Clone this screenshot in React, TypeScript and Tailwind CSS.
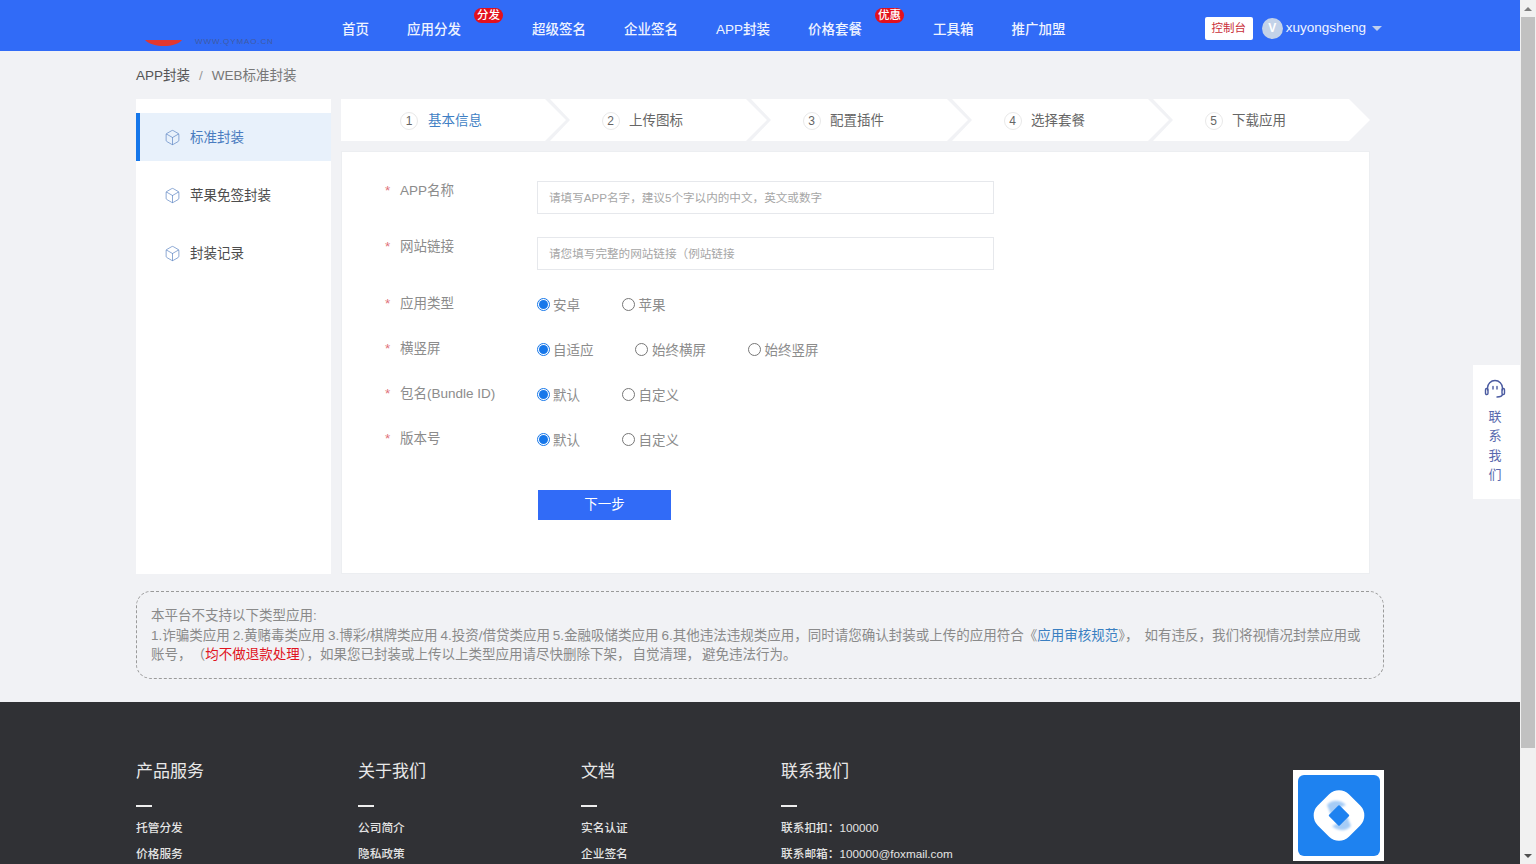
import { Box } from "lucide-react";

const navItems = [
  { label: "首页" },
  { label: "应用分发", badge: "分发" },
  { label: "超级签名" },
  { label: "企业签名" },
  { label: "APP封装" },
  { label: "价格套餐", badge: "优惠" },
  { label: "工具箱" },
  { label: "推广加盟" },
];

const steps = ["基本信息", "上传图标", "配置插件", "选择套餐", "下载应用"];

const sideItems = ["标准封装", "苹果免签封装", "封装记录"];

const radioRows = [
  { label: "应用类型", options: ["安卓", "苹果"] },
  { label: "横竖屏", options: ["自适应", "始终横屏", "始终竖屏"] },
  { label: "包名(Bundle ID)", options: ["默认", "自定义"] },
  { label: "版本号", options: ["默认", "自定义"] },
];

const footerCols = [
  { title: "产品服务", width: "w-[222px]", links: ["托管分发", "价格服务"] },
  { title: "关于我们", width: "w-[223px]", links: ["公司简介", "隐私政策"] },
  { title: "文档", width: "w-[200px]", links: ["实名认证", "企业签名"] },
  { title: "联系我们", width: "w-[300px]", links: ["联系扣扣：100000", "联系邮箱：100000@foxmail.com"] },
];

function FieldLabel({ text }: { text: string }) {
  return (
    <div className="flex h-[18px] w-[152px] translate-y-px items-center text-[13.5px] leading-[18px] text-[#8c8c8c]">
      <span className="w-[15px] text-[#e0707a]">*</span>
      <span className="whitespace-nowrap">{text}</span>
    </div>
  );
}

function Radio({ label, checked }: { label: string; checked?: boolean }) {
  return (
    <div className="flex items-center">
      {checked ? (
        <span className="flex h-[13px] w-[13px] items-center justify-center rounded-full border border-[#1677ea]">
          <span className="h-[9px] w-[9px] rounded-full bg-[#1677ea]" />
        </span>
      ) : (
        <span className="h-[13px] w-[13px] rounded-full border border-[#777]" />
      )}
      <span className={`mt-[2px] translate-y-px text-[13.5px] leading-[18px] text-[#8c8c8c] ${checked ? "ml-[3px]" : "ml-[4px]"}`}>
        {label}
      </span>
    </div>
  );
}

function TextField({ placeholder }: { placeholder: string }) {
  return (
    <input
      readOnly
      placeholder={placeholder}
      className="h-[33px] w-[457px] border border-[#e6e8ec] bg-white px-[11px] pb-[1px] text-[11.6px] outline-none placeholder:text-[#a6a6a6]"
    />
  );
}

export default function App() {
  return (
    <div className="flex h-screen overflow-hidden bg-[#f1f1f1] font-['Liberation_Sans','Noto_Sans_CJK_SC',sans-serif]">
      <div className="relative h-full w-[1520px] shrink-0 overflow-hidden bg-[#f1f2f5]">
        {/* Header */}
        <header className="flex h-[51px] bg-[#316bf7] pl-[136px] pr-[138px]">
          <div className="flex h-full w-[206px] overflow-hidden">
            <svg viewBox="0 0 37 7" className="ml-[9px] mt-[40px] h-[7px] w-[37px] shrink-0">
              <path d="M0 0 H37 C30 8 8 8 0 0 Z" fill="#e2372f" />
            </svg>
            <span className="ml-[13px] mt-[37px] whitespace-nowrap text-[8px] leading-[10px] tracking-[0.9px] text-[#3f5aa5]">
              WWW.QYMAO.CN
            </span>
          </div>
          <nav className="flex h-full items-center gap-[38px] pt-[8px]">
            {navItems.map((item) => (
              <div
                key={item.label}
                className={`relative whitespace-nowrap text-[13.5px] font-medium leading-5 text-[#eef3ff] ${item.badge ? "mr-[33px]" : ""}`}
              >
                {item.label}
                {item.badge && (
                  <span className="absolute left-[calc(100%+13px)] top-[-12px] flex h-[15px] w-[29px] items-center justify-center rounded-full bg-[#e3101c] text-[11.5px] text-white">
                    {item.badge}
                  </span>
                )}
              </div>
            ))}
          </nav>
          <div className="ml-auto flex h-full items-center pt-[5px]">
            <div className="flex h-[23px] w-[48px] items-center justify-center rounded-[2px] bg-white pt-[2px] text-[11.5px] text-[#c9303a]">
              控制台
            </div>
            <div className="ml-[9px] flex h-[21px] w-[21px] items-center justify-center rounded-full bg-[#c3d2e8] text-[12px] font-bold text-white">
              V
            </div>
            <span className="ml-[3px] text-[13.5px] text-[#eef3ff]">xuyongsheng</span>
            <span className="ml-[6px] mt-[1px] h-0 w-0 border-x-[5px] border-t-[5px] border-x-transparent border-t-[#c0cfee]" />
          </div>
        </header>

        {/* Breadcrumb */}
        <div className="flex h-[48px] items-center pl-[136px] pt-[2px] text-[13.5px]">
          <span className="text-[#555]">APP封装</span>
          <span className="mx-[9px] text-[#999]">/</span>
          <span className="text-[#777]">WEB标准封装</span>
        </div>

        <div className="ml-[136px] w-[1248px]">
          <div className="flex h-[475px]">
            {/* Sidebar */}
            <aside className="w-[195px] shrink-0 bg-white pt-[14px]">
              <div className="flex flex-col gap-[10px]">
                {sideItems.map((item, i) => (
                  <div
                    key={item}
                    className={`flex h-[48px] items-center text-[13.5px] ${i === 0 ? "border-l-4 border-[#1677ea] bg-[#e8f1fb] pl-[25px] text-[#4a7cc0]" : "pl-[29px] text-[#4d4d4d]"}`}
                  >
                    <Box size={17} strokeWidth={1} className="-ml-px shrink-0 text-[#5f86c4]" />
                    <span className="ml-[9px] translate-y-[1px]">{item}</span>
                  </div>
                ))}
              </div>
            </aside>

            <div className="ml-[10px] w-[1029px]">
              {/* Steps */}
              <div className="flex h-[42px]">
                {steps.map((step, i) => (
                  <div
                    key={step}
                    className={
                      i === 0
                        ? "flex h-full w-[225px] shrink-0 items-center bg-white pl-[59px] [clip-path:polygon(0_0,204px_0,100%_50%,204px_100%,0_100%)]"
                        : "-ml-[16px] flex h-full w-[217px] shrink-0 items-center bg-white pl-[51.5px] [clip-path:polygon(0_0,196px_0,100%_50%,196px_100%,0_100%,20px_50%)]"
                    }
                  >
                    <span className="flex h-[18px] w-[18px] translate-y-px items-center justify-center rounded-full border border-[#e8e8e8] text-[12px] text-[#666]">
                      {i + 1}
                    </span>
                    <span className={`translate-y-px text-[13.5px] ${i === 0 ? "ml-[10px] text-[#3f7fc4]" : "ml-[9.5px] text-[#666]"}`}>
                      {step}
                    </span>
                  </div>
                ))}
              </div>

              {/* Form */}
              <div className="mt-[10px] h-[423px] border border-[#eceef1] bg-white pl-[43px] pt-[29px]">
                <div className="mb-[23px] flex">
                  <FieldLabel text="APP名称" />
                  <TextField placeholder="请填写APP名字，建议5个字以内的中文，英文或数字" />
                </div>
                <div className="mb-[24px] flex">
                  <FieldLabel text="网站链接" />
                  <TextField placeholder="请您填写完整的网站链接（例站链接" />
                </div>
                {radioRows.map((row) => (
                  <div key={row.label} className="mb-[25px] flex h-[20px]">
                    <FieldLabel text={row.label} />
                    <div className="flex h-[20px] gap-[41.5px]">
                      {row.options.map((option, i) => (
                        <Radio key={option} label={option} checked={i === 0} />
                      ))}
                    </div>
                  </div>
                ))}
                <button className="ml-[153px] mt-[41px] flex h-[30px] w-[133px] items-center justify-center bg-[#316bf7] text-[13.5px] text-white">
                  下一步
                </button>
              </div>
            </div>
          </div>

          {/* Notice */}
          <div className="mt-[17px] h-[88px] whitespace-nowrap rounded-[15px] border border-dashed border-[#9a9a9a] pl-[14px] pt-[14px] text-[13.5px] leading-[19.5px] text-[#8a8a8a] [word-spacing:-0.8px]">
            本平台不支持以下类型应用:
            <br />
            1.诈骗类应用 2.黄赌毒类应用 3.博彩/棋牌类应用 4.投资/借贷类应用 5.金融吸储类应用 6.其他违法违规类应用，同时请您确认封装或上传的应用符合《
            <span className="text-[#3a7fc1]">应用审核规范</span>
            》，<span className="ml-[6px]">如有违反，我们将视情况封禁应用或</span>
            <br />
            账号，<span className="ml-[7px]">（</span><span className="text-[#e0141e]">均不做退款处理</span>），如果您已封装或上传以上类型应用请尽快删除下架，<span className="ml-[2px]">自觉清理，</span><span className="ml-[2px]">避免违法行为。</span>
          </div>
        </div>

        {/* Footer */}
        <footer className="mt-[23px] flex h-[200px] bg-[#303135] pl-[136px] pr-[136px] pt-[59px]">
          {footerCols.map((col) => (
            <div key={col.title} className={`${col.width} shrink-0`}>
              <div className="text-[17px] leading-[22px] text-[#e8e8e8]">{col.title}</div>
              <div className="mt-[22px] h-[2px] w-[16px] bg-[#eee]" />
              <div className="mt-[13px] flex flex-col gap-[10px]">
                {col.links.map((link) => (
                  <div key={link} className="whitespace-nowrap text-[11.7px] font-medium leading-4 text-[#e4e4e4]">
                    {link}
                  </div>
                ))}
              </div>
            </div>
          ))}
          <div className="ml-auto mt-[9px] h-[91px] w-[91px] shrink-0 bg-white p-[5px]">
            <svg viewBox="0 0 82 81" className="h-[81px] w-[82px]">
              <defs>
                <filter id="soft" x="-30%" y="-30%" width="160%" height="160%">
                  <feGaussianBlur stdDeviation="1.1" />
                </filter>
              </defs>
              <rect width="82" height="81" rx="6" fill="#1e82f0" />
              <rect x="19" y="18.5" width="44" height="44" rx="14" transform="rotate(45 41 40.5)" fill="#fff" />
              <g filter="url(#soft)" fill="#a6ccf6">
                <path d="M29 30 C34 24 43 25 48 30 L41 33 L33 40 Z" />
                <path d="M53 51 C48 57 39 56 34 51 L41 48 L49 41 Z" />
              </g>
              <rect x="33.5" y="33" width="15" height="15" rx="1" transform="rotate(45 41 40.5)" fill="#1e82f0" />
            </svg>
          </div>
        </footer>

        {/* Contact widget */}
        <div className="absolute right-0 top-[365px] flex h-[134px] w-[47px] flex-col items-center bg-white pr-[3px] pt-[14px]">
          <svg viewBox="0 0 22 20" className="h-[20px] w-[22px]" fill="none" stroke="#4a5aa0" strokeWidth="1.4" strokeLinecap="round">
            <path d="M3.5 11 V9 a7.5 7.5 0 0 1 15 0 V11" />
            <rect x="1.5" y="9.5" width="2.5" height="6" rx="1.2" />
            <rect x="18" y="9.5" width="2.5" height="6" rx="1.2" />
            <path d="M18.5 15.5 C18 17.5 15.5 18 13 18" />
            <path d="M9 7.5 V10 M13 7.5 V10" />
          </svg>
          <div className="mt-[8px] flex flex-col items-center text-[13px] leading-[19.3px] text-[#5a6aae]">
            <span>联</span>
            <span>系</span>
            <span>我</span>
            <span>们</span>
          </div>
        </div>
      </div>

      {/* Scrollbar */}
      <div className="flex h-full w-4 shrink-0 flex-col items-center bg-[#f1f1f1]">
        <div className="flex h-[17px] items-center">
          <span className="h-0 w-0 border-x-4 border-b-4 border-x-transparent border-b-[#7d7d7d]" />
        </div>
        <div className="h-[731px] w-[14px] bg-[#c1c1c1]" />
        <div className="mt-auto flex h-[17px] items-center">
          <span className="h-0 w-0 border-x-4 border-t-4 border-x-transparent border-t-[#505050]" />
        </div>
      </div>
    </div>
  );
}
